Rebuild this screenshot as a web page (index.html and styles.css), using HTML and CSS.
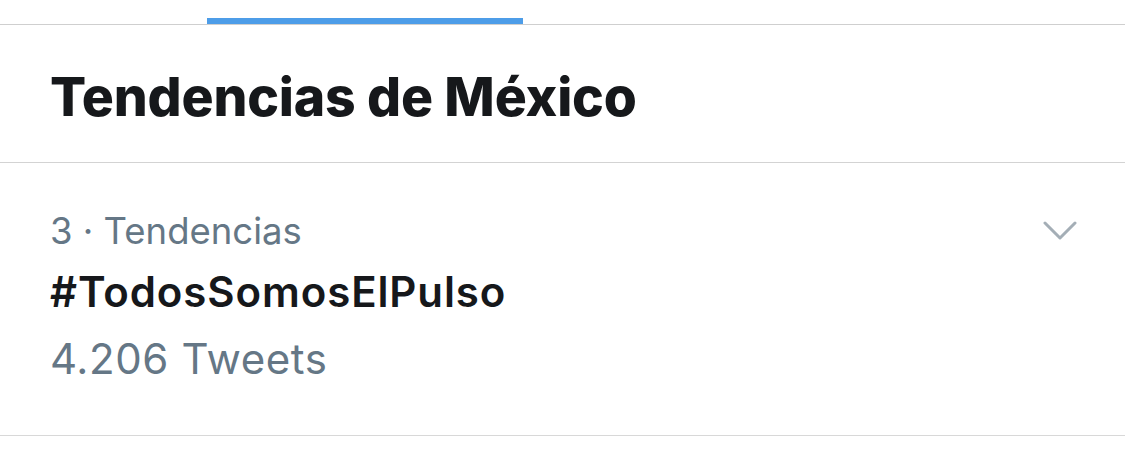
FILE: index.html
```html
<!DOCTYPE html>
<html lang="es">
<head>
<meta charset="utf-8">
<link rel="stylesheet" href="styles.css">
</head>
<body>
<div class="tabs">
  <div class="tab"></div>
  <div class="tab active"></div>
  <div class="tab"></div>
</div>
<header class="section-head">
  <h1 class="title">Tendencias de México</h1>
</header>
<div class="trend">
  <div class="trend-body">
    <div class="meta">3 · Tendencias</div>
    <div class="name">#TodosSomosElPulso</div>
    <div class="count">4.206 Tweets</div>
  </div>
  <div class="caret">
    <svg width="34" height="22" viewBox="0 0 34 22"><path d="M2 4 L17 19 L32 4" fill="none" stroke="#a4aeb6" stroke-width="3" stroke-linecap="round" stroke-linejoin="round"/></svg>
  </div>
</div>
</body>
</html>
```
FILE: styles.css
```css
html, body {
  margin: 0;
  padding: 0;
  background: #ffffff;
}
body {
  font-family: Inter, "Noto Sans", "Liberation Sans", sans-serif;
  width: 1125px;
  height: 450px;
  overflow: hidden;
}
.tabs {
  display: flex;
  height: 24px;
  border-bottom: 1px solid #cfcfcf;
  padding-left: 207px;
}
.tab.active {
  width: 316px;
  height: 6px;
  align-self: flex-end;
  background: #4d9de8;
}
.section-head {
  height: 137px;
  border-bottom: 1px solid #d3d3d3;
  display: flex;
  align-items: center;
  padding-left: 50px;
}
.title {
  margin: 0;
  padding-top: 6px;
  font-size: 53.5px;
  font-weight: 800;
  color: #16181b;
  letter-spacing: -0.2px;
}
.trend {
  height: 272px;
  border-bottom: 1px solid #d8d8d8;
  display: flex;
  justify-content: space-between;
  padding: 0 48px 0 50px;
}
.trend-body {
  padding-top: 40px;
}
.meta {
  font-size: 36.5px;
  color: #657786;
  line-height: 56px;
}
.name {
  font-size: 42px;
  font-weight: 600;
  color: #16181b;
  letter-spacing: 0.9px;
  line-height: 66px;
}
.count {
  font-size: 42px;
  color: #657786;
  letter-spacing: 0.6px;
  line-height: 68px;
}
.caret {
  padding-top: 56px;
}
.caret svg {
  display: block;
}
```
